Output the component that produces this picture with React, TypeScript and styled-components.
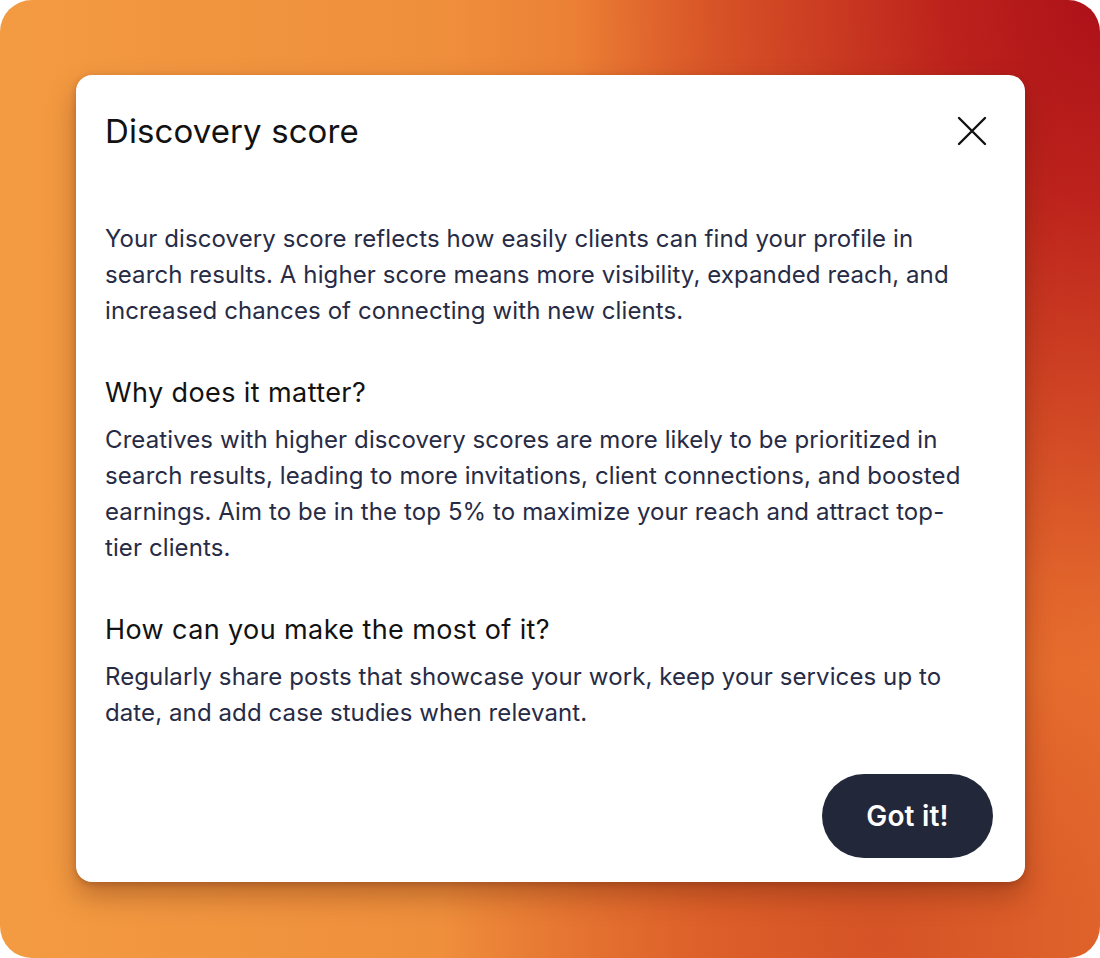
import styled, { createGlobalStyle } from "styled-components"

const GlobalStyle = createGlobalStyle`
    html, body {
        margin: 0;
        padding: 0;
        background: #ffffff;
    }

    * {
        box-sizing: border-box;
    }
`

function CloseIcon() {
    return (
        <svg width="30" height="30" viewBox="0 0 30 30" fill="none">
            <path
                d="M2 2L28 28M28 2L2 28"
                stroke="#111111"
                strokeWidth="2.4"
                strokeLinecap="round"
            />
        </svg>
    )
}

function App() {
    return (
        <>
            <GlobalStyle />
            <Frame>
                <Card>
                    <CardHeader>
                        <Title>Discovery score</Title>
                        <CloseButton aria-label="Close">
                            <CloseIcon />
                        </CloseButton>
                    </CardHeader>

                    <Body>
                        <Text>
                            Your discovery score reflects how easily clients can
                            find your profile in search results. A higher score
                            means more visibility, expanded reach, and increased
                            chances of connecting with new clients.
                        </Text>

                        <Section>
                            <Heading>Why does it matter?</Heading>
                            <Text>
                                Creatives with higher discovery scores are more
                                likely to be prioritized in search results,
                                leading to more invitations, client connections,
                                and boosted earnings. Aim to be in the top 5% to
                                maximize your reach and attract top-tier clients.
                            </Text>
                        </Section>

                        <Section>
                            <Heading>How can you make the most of it?</Heading>
                            <Text>
                                Regularly share posts that showcase your work,
                                keep your services up to date, and add case
                                studies when relevant.
                            </Text>
                        </Section>
                    </Body>

                    <Footer>
                        <PrimaryButton>Got it!</PrimaryButton>
                    </Footer>
                </Card>
            </Frame>
        </>
    )
}

export default App

const Frame = styled.div`
    width: 1100px;
    height: 958px;
    border-radius: 32px;
    overflow: hidden;
    padding: 75px 75px 76px 76px;
    background:
        radial-gradient(ellipse 48% 70% at 100% 0%, #ad1119 0%, #bd231c 30%, rgba(200, 50, 30, 0) 100%),
        radial-gradient(ellipse 40% 40% at 80% 98%, rgba(205, 70, 35, 0.7) 0%, rgba(205, 70, 35, 0) 100%),
        linear-gradient(90deg, #f39b42 0%, #ef8f3c 40%, #e8712e 65%, #e9722f 100%);
    font-family: Inter, "Noto Sans", sans-serif;
`

const Card = styled.div`
    width: 949px;
    height: 807px;
    background: #ffffff;
    border-radius: 16px;
    box-shadow: 0 14px 28px rgba(90, 30, 10, 0.35), 0 2px 6px rgba(90, 30, 10, 0.25);
    padding: 36px 32px 24px 29px;
    display: flex;
    flex-direction: column;
`

const CardHeader = styled.div`
    display: flex;
    align-items: center;
    justify-content: space-between;
    height: 40px;
`

const Title = styled.h1`
    margin: 0;
    font-size: 33px;
    line-height: 40px;
    font-weight: 400;
    color: #121212;
    letter-spacing: 0.1px;
`

const CloseButton = styled.button`
    border: none;
    background: none;
    padding: 0;
    margin-right: 6px;
    width: 30px;
    height: 30px;
    display: flex;
    align-items: center;
    justify-content: center;
    cursor: pointer;
`

const Body = styled.div`
    display: flex;
    flex-direction: column;
    gap: 47px;
    margin-top: 70px;
    max-width: 870px;
`

const Section = styled.div`
    display: flex;
    flex-direction: column;
    gap: 12px;
`

const Heading = styled.h2`
    margin: 0;
    font-size: 27px;
    line-height: 34px;
    font-weight: 400;
    color: #121212;
    letter-spacing: 0.4px;
`

const Text = styled.p`
    margin: 0;
    font-size: 24px;
    line-height: 36px;
    color: #272b45;
    letter-spacing: 0.1px;
`

const Footer = styled.div`
    margin-top: auto;
    display: flex;
    justify-content: flex-end;
`

const PrimaryButton = styled.button`
    width: 171px;
    height: 84px;
    border: none;
    border-radius: 42px;
    background: #23273a;
    color: #ffffff;
    font-family: Inter, "Noto Sans", sans-serif;
    font-size: 28px;
    font-weight: 600;
    letter-spacing: 0.2px;
    cursor: pointer;
`
